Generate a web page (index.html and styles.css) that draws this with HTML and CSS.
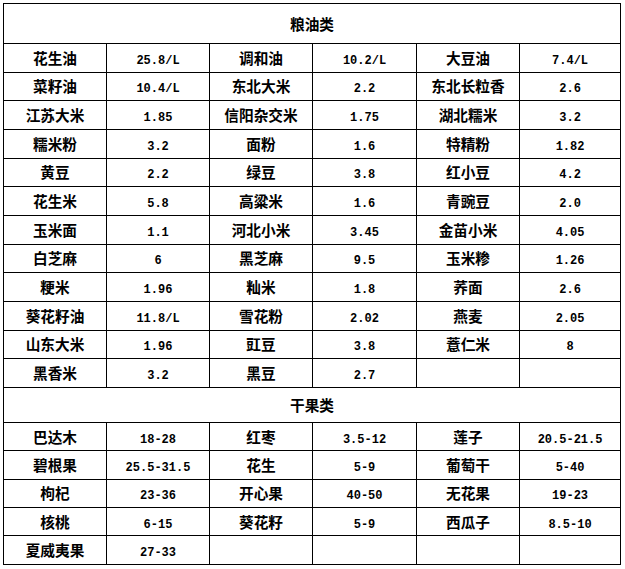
FILE: index.html
```html
<!DOCTYPE html>
<html>
<head>
<meta charset="utf-8">
<link rel="stylesheet" href="styles.css">
</head>
<body>
<table class="price">
<colgroup><col class="c1"><col class="c2"><col class="c3"><col class="c4"><col class="c5"><col class="c6"></colgroup>
<tr class="head1"><td colspan="6">粮油类</td></tr>
<tr><td>花生油</td><td class="n">25.8/L</td><td>调和油</td><td class="n">10.2/L</td><td>大豆油</td><td class="n">7.4/L</td></tr>
<tr><td>菜籽油</td><td class="n">10.4/L</td><td>东北大米</td><td class="n">2.2</td><td>东北长粒香</td><td class="n">2.6</td></tr>
<tr><td>江苏大米</td><td class="n">1.85</td><td>信阳杂交米</td><td class="n">1.75</td><td>湖北糯米</td><td class="n">3.2</td></tr>
<tr><td>糯米粉</td><td class="n">3.2</td><td>面粉</td><td class="n">1.6</td><td>特精粉</td><td class="n">1.82</td></tr>
<tr><td>黄豆</td><td class="n">2.2</td><td>绿豆</td><td class="n">3.8</td><td>红小豆</td><td class="n">4.2</td></tr>
<tr><td>花生米</td><td class="n">5.8</td><td>高粱米</td><td class="n">1.6</td><td>青豌豆</td><td class="n">2.0</td></tr>
<tr><td>玉米面</td><td class="n">1.1</td><td>河北小米</td><td class="n">3.45</td><td>金苗小米</td><td class="n">4.05</td></tr>
<tr><td>白芝麻</td><td class="n">6</td><td>黑芝麻</td><td class="n">9.5</td><td>玉米糁</td><td class="n">1.26</td></tr>
<tr><td>粳米</td><td class="n">1.96</td><td>籼米</td><td class="n">1.8</td><td>荞面</td><td class="n">2.6</td></tr>
<tr><td>葵花籽油</td><td class="n">11.8/L</td><td>雪花粉</td><td class="n">2.02</td><td>燕麦</td><td class="n">2.05</td></tr>
<tr><td>山东大米</td><td class="n">1.96</td><td>豇豆</td><td class="n">3.8</td><td>薏仁米</td><td class="n">8</td></tr>
<tr><td>黑香米</td><td class="n">3.2</td><td>黑豆</td><td class="n">2.7</td><td></td><td></td></tr>
<tr class="head2"><td colspan="6">干果类</td></tr>
<tr class="f"><td>巴达木</td><td class="n">18-28</td><td>红枣</td><td class="n">3.5-12</td><td>莲子</td><td class="n">20.5-21.5</td></tr>
<tr class="f"><td>碧根果</td><td class="n">25.5-31.5</td><td>花生</td><td class="n">5-9</td><td>葡萄干</td><td class="n">5-40</td></tr>
<tr class="f"><td>枸杞</td><td class="n">23-36</td><td>开心果</td><td class="n">40-50</td><td>无花果</td><td class="n">19-23</td></tr>
<tr class="f"><td>核桃</td><td class="n">6-15</td><td>葵花籽</td><td class="n">5-9</td><td>西瓜子</td><td class="n">8.5-10</td></tr>
<tr class="f"><td>夏威夷果</td><td class="n">27-33</td><td></td><td></td><td></td><td></td></tr>
</table>
</body>
</html>
```
FILE: styles.css
```css
html, body {
  margin: 0;
  padding: 0;
  background: #fff;
}
body {
  padding: 3px 0 0 3px;
}
.price {
  border-collapse: collapse;
  table-layout: fixed;
  width: 617px;
  font-family: "Noto Sans CJK SC", "Noto Sans", sans-serif;
  font-weight: bold;
  font-size: 14.67px;
  color: #000;
}
.c1 { width: 103px; }
.c2 { width: 103px; }
.c3 { width: 103px; }
.c4 { width: 104px; }
.c5 { width: 103px; }
.c6 { width: 101px; }
.price td {
  border: 1px solid #000;
  text-align: center;
  vertical-align: middle;
  padding: 0;
  height: 27.67px;
  line-height: 18px;
  white-space: nowrap;
}
.price td.n {
  font-family: "Liberation Mono", monospace;
  font-size: 12px;
  font-weight: bold;
  padding-top: 6px;
  height: 21.67px;
}
.price .head1 td {
  height: 39px;
}
.price .head2 td {
  height: 34px;
}
.price .f td {
  height: 27.4px;
}
.price .f td.n {
  height: 21.4px;
}
```
